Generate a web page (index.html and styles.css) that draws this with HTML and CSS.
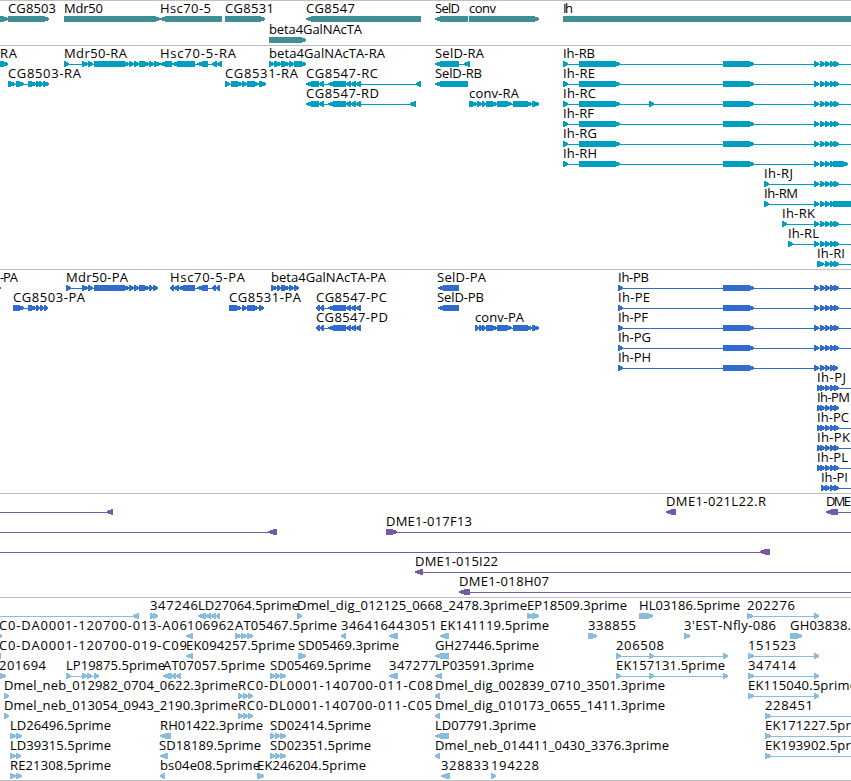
FILE: index.html
```html
<!DOCTYPE html>
<html lang="en">
  <head>
    <meta charset="utf-8">
    <meta name="viewport" content="width=device-width, initial-scale=1">
    <title>Genome Browser</title>
    <link rel="stylesheet" href="styles.css">
  </head>
  <body>
    <main class="browser">
      <section class="track gene" id="gene"></section>
      <section class="track transcript" id="transcript"></section>
      <section class="track protein" id="protein"></section>
      <section class="track clone" id="clone"></section>
      <section class="track est" id="est"></section>
    </main>
    <script src="tracks.js"></script>
  </body>
</html>
```
FILE: styles.css
```css
body {
  margin: 0;
  background: #fff;
  color: #000;
  font-family: "Open Sans", "Noto Sans", sans-serif;
  font-size: 13px;
  overflow: hidden;
}

.browser {
  width: 851px;
  border-bottom: 1px solid #c0c0c0;
}

.track {
  border-top: 1px solid #c0c0c0;
  padding-bottom: 3px;
}
.track svg {
  display: block;
  width: 100%;
}
.track text {
  fill: #000;
}
.track path {
  fill: currentColor;
  shape-rendering: crispEdges;
}

.gene {
  color: #408f94;
  padding-bottom: 2px;
}
.transcript {
  color: #009fc1;
}
.protein {
  color: #306ccd;
}
.clone {
  color: #7759a9;
}
.est {
  color: #88bddf;
  padding-bottom: 2px;
}
```
FILE: tracks.js
```js
// Each feature is [label, label start, label end, parts].
// Parts: "a>b" forward exon, "a<b" reverse exon, "a:b" intron only.
const ihEnd = '814>819 820>825 825>830 830>835 834>839 839:870';
const ihR = '563>568 579>620 723>754 ' + ihEnd;
const ihP = '618>623 723>754 ' + ihEnd;
const ihShort = '817>822 820>825 825>830 830>835 834>839';
const cg8547 = '306<319 319<324 328<346 346<351 351<356 356<361 ';
const cg8547P = '316<320 320<324 328<346 346<351 351<356 356<361';
const spliced = '616>621 649>654 723>728';

const tracks = {
  gene: { pitch: 21, rows: [
    [
      ['', 0, 0, '-5>8'],
      ['CG8503', 8, 56, '8>49'],
      ['Mdr50', 64, 103, '64>160'],
      ['Hsc70-5', 160, 211, '160<222'],
      ['CG8531', 225, 274, '225>265'],
      ['CG8547', 306, 355, '306<421'],
      ['SelD', 435, 460, '435<468'],
      ['conv', 469, 496, '469>539'],
      ['Ih', 563, 573, '563>870']
    ],
    [['beta4GalNAcTA', 269, 362, '269>306']]
  ] },
  transcript: { pitch: 20, rows: [
    [
      ['RA', 0, 17, '-5>8'],
      ['Mdr50-RA', 64, 127, '64>69 82>88 88>93 94>129 129>134 134>139 139>149 149>154 154>160'],
      ['Hsc70-5-RA', 160, 236, '160<172 172<195 197<208 212<217 217<222'],
      ['beta4GalNAcTA-RA', 269, 385, '269>274 274>281 281>289 289>294 294>306'],
      ['SelD-RA', 435, 484, '435<459 464<470'],
      ['Ih-RB', 563, 595, ihR]
    ],
    [
      ['CG8503-RA', 8, 81, '8>15 16>24 28>36 36>39 39>43 43>49'],
      ['CG8531-RA', 225, 298, '225>230 231>242 242>247 247>259 259>266'],
      ['CG8547-RC', 306, 378, cg8547 + '416<421'],
      ['SelD-RB', 435, 482, '435<468'],
      ['Ih-RE', 563, 595, ihR]
    ],
    [
      ['CG8547-RD', 306, 379, cg8547 + '410<416'],
      ['conv-RA', 469, 519, '469>477 477>482 482>486 486>497 497>512 513>532 532>539'],
      ['Ih-RC', 563, 596, ihR + ' 649>654']
    ],
    [['Ih-RF', 563, 594, ihR]],
    [['Ih-RG', 563, 597, ihR]],
    [['Ih-RH', 563, 597, '563>568 579>620 723>754 814>819 820>825 825>830 830>835 833>848']],
    [['Ih-RJ', 764, 793, '764>769 ' + ihEnd]],
    [['Ih-RM', 764, 798, '764>769 814>819 820>825 825>830 830>835 833>870']],
    [['Ih-RK', 782, 815, '782>787 ' + ihEnd]],
    [['Ih-RL', 788, 819, '788>793 ' + ihEnd]],
    [['Ih-RI', 817, 845, '817>824 825>830 830>835 834>839 839:870']]
  ] },
  protein: { pitch: 20, rows: [
    [
      ['-PA', 0, 18, '-5>1'],
      ['Mdr50-PA', 66, 128, '66>71 82>88 88>93 94>129 129>134 134>139 139>149 149>153 153>158'],
      ['Hsc70-5-PA', 170, 245, '170<174 174<179 178<195 197<208 212<216 216<220'],
      ['beta4GalNAcTA-PA', 271, 386, '271>277 277>281 281>289 289>294 294>299'],
      ['SelD-PA', 437, 486, '438<459'],
      ['Ih-PB', 618, 649, ihP]
    ],
    [
      ['CG8503-PA', 13, 85, '13>24 28>36 36>40 40>44 44>48'],
      ['CG8531-PA', 229, 301, '229>241 242>247 247>259 259>264'],
      ['CG8547-PC', 316, 387, cg8547P],
      ['SelD-PB', 437, 484, '438<459'],
      ['Ih-PE', 618, 650, ihP]
    ],
    [
      ['CG8547-PD', 316, 388, cg8547P],
      ['conv-PA', 475, 524, '475>479 479>482 482>486 486>497 497>512 513>532 532>539'],
      ['Ih-PF', 618, 648, ihP]
    ],
    [['Ih-PG', 618, 651, ihP]],
    [['Ih-PH', 618, 651, '618>623 723>754 814>819 820>825 825>830 830>835 833>838']],
    [['Ih-PJ', 817, 846, ihShort + ' 839:870']],
    [['Ih-PM', 817, 850, ihShort]],
    [['Ih-PC', 817, 849, ihShort + ' 839:870']],
    [['Ih-PK', 817, 850, ihShort + ' 839:870']],
    [['Ih-PL', 817, 848, ihShort + ' 839:870']],
    [['Ih-PI', 821, 848, '821>826 825>830 830>835 834>839 839:870']]
  ] },
  clone: { pitch: 20, rows: [
    [
      ['', 0, 0, '-5:107 107<113'],
      ['DME1-021L22.R', 666, 766, '666<676'],
      ['DME', 826, 851, '826<838 838:870']
    ],
    [
      ['', 0, 0, '-5:268 268<277'],
      ['DME1-017F13', 386, 472, '386>397 397:870']
    ],
    [['', 0, 0, '-5:760 760<770']],
    [['DME1-015I22', 415, 498, '415<423 423:870']],
    [['DME1-018H07', 459, 549, '459<470 470:870']]
  ] },
  est: { pitch: 20, rows: [
    [
      ['', 0, 0, '-5:133 133<139'],
      ['347246', 150, 198, '150>155 153>158'],
      ['LD27064.5prime', 198, 299, '198<206 206<211 211<216 216<220'],
      ['Dmel_dig_012125_0668_2478.3prime', 297, 527, '297>302'],
      ['EP18509.3prime', 527, 627, '527>533 532>539'],
      ['HL03186.5prime', 639, 740, '639>653'],
      ['202276', 747, 795, '747>753 814>819']
    ],
    [
      ['C0-DA0001-120700-013-A06', -1, 187, '-4>2'],
      ['106962', 187, 234, '186<193'],
      ['AT05467.5prime', 235, 337, '235>241 241>247 247>253'],
      ['346416', 341, 388, '341<346'],
      ['443051', 388, 437, '389<398'],
      ['EK141119.5prime', 440, 549, '440<449'],
      ['338855', 588, 636, '588>597'],
      ["3'EST-Nfly-086", 684, 776, '684>690'],
      ['GH03838.', 790, 851, '790>802']
    ],
    [
      ['C0-DA0001-120700-019-C09', -1, 187, '-4<1'],
      ['EK094257.5prime', 186, 295, '186<193'],
      ['SD05469.3prime', 298, 399, '298>306'],
      ['GH27446.5prime', 435, 539, '435<449'],
      ['206508', 616, 664, spliced],
      ['151523', 748, 796, '748>754 814>819']
    ],
    [
      ['201694', -1, 46, '-3>6'],
      ['LP19875.5prime', 66, 165, '66>71 82>87 87>92 94>99'],
      ['AT07057.5prime', 163, 265, '163<172 172<176 176<181'],
      ['SD05469.5prime', 270, 371, '270>275 275>280 280>286'],
      ['347277', 389, 436, '389<398'],
      ['LP03591.3prime', 435, 534, '435<442'],
      ['EK157131.5prime', 616, 725, spliced],
      ['347414', 748, 796, '748>754 814>819']
    ],
    [
      ['Dmel_neb_012982_0704_0622.3prime', 4, 238, '4>9'],
      ['RC0-DL0001-140700-011-C08', 238, 433, '238>243 243>248 248>253'],
      ['Dmel_dig_002839_0710_3501.3prime', 435, 665, '435<440'],
      ['EK115040.5prime', 748, 857, '748>754 814>819']
    ],
    [
      ['Dmel_neb_013054_0943_2190.3prime', 4, 238, '4>9'],
      ['RC0-DL0001-140700-011-C05', 238, 432, '238>243 243>248 248>253'],
      ['Dmel_dig_010173_0655_1411.3prime', 435, 665, '435<440'],
      ['228451', 765, 813, '765>771 771:870']
    ],
    [
      ['LD26496.5prime', 10, 111, '10>16 16>22'],
      ['RH01422.3prime', 160, 263, '160<171'],
      ['SD02414.5prime', 270, 371, '270>275 275>280 280>286'],
      ['LD07791.3prime', 435, 536, '435<449'],
      ['EK171227.5prime', 765, 874, '765>771 771:870']
    ],
    [
      ['LD39315.5prime', 10, 111, '10>16 16>21'],
      ['SD18189.5prime', 159, 261, '160<168'],
      ['SD02351.5prime', 270, 371, '270>275 275>280 280>286'],
      ['Dmel_neb_014411_0430_3376.3prime', 435, 669, '435<440'],
      ['EK193902.5prime', 765, 874, '765>771 771:870']
    ],
    [
      ['RE21308.5prime', 10, 111, '10>16 16>22'],
      ['bs04e08.5prime', 160, 260, '160<165'],
      ['EK246204.5prime', 257, 366, '257>264'],
      ['328833', 441, 489, '441<450'],
      ['194228', 491, 539, '491>496']
    ]
  ] }
};

// Exon body is 6px tall and narrows to a blunt point over the last 6px
function exon(a, b, dir, y) {
  const tip = Math.min(6, b - a - 1);
  if (dir === '>') {
    return `M${a} ${y}H${b - tip}L${b} ${y + 2}V${y + 4}L${b - tip} ${y + 6}H${a}Z`;
  }
  return `M${b} ${y}H${a + tip}L${a} ${y + 2}V${y + 4}L${a + tip} ${y + 6}H${b}Z`;
}

function drawFeature([label, start, end, parts], top) {
  const y = top + 15;
  let d = '';
  let min = Infinity;
  let max = -Infinity;
  for (const part of parts.split(' ')) {
    const [, a, dir, b] = part.match(/^(-?\d+)([<>:])(-?\d+)$/);
    min = Math.min(min, +a);
    max = Math.max(max, +b);
    if (dir !== ':') {
      d += exon(+a, +b, dir, y);
    }
  }
  let svg = `<path d="M${min} ${y + 3}H${max}V${y + 4}H${min}Z"/><path d="${d}"/>`;
  if (label) {
    svg += `<text x="${start}" y="${top + 12}" textLength="${end - start}">${label}</text>`;
  }
  return svg;
}

for (const [id, track] of Object.entries(tracks)) {
  const height = track.rows.length * track.pitch;
  const body = track.rows
    .map((row, i) => row.map((feature) => drawFeature(feature, i * track.pitch)).join(''))
    .join('');
  document.getElementById(id).innerHTML =
    `<svg height="${height}" overflow="visible">${body}</svg>`;
}
```
